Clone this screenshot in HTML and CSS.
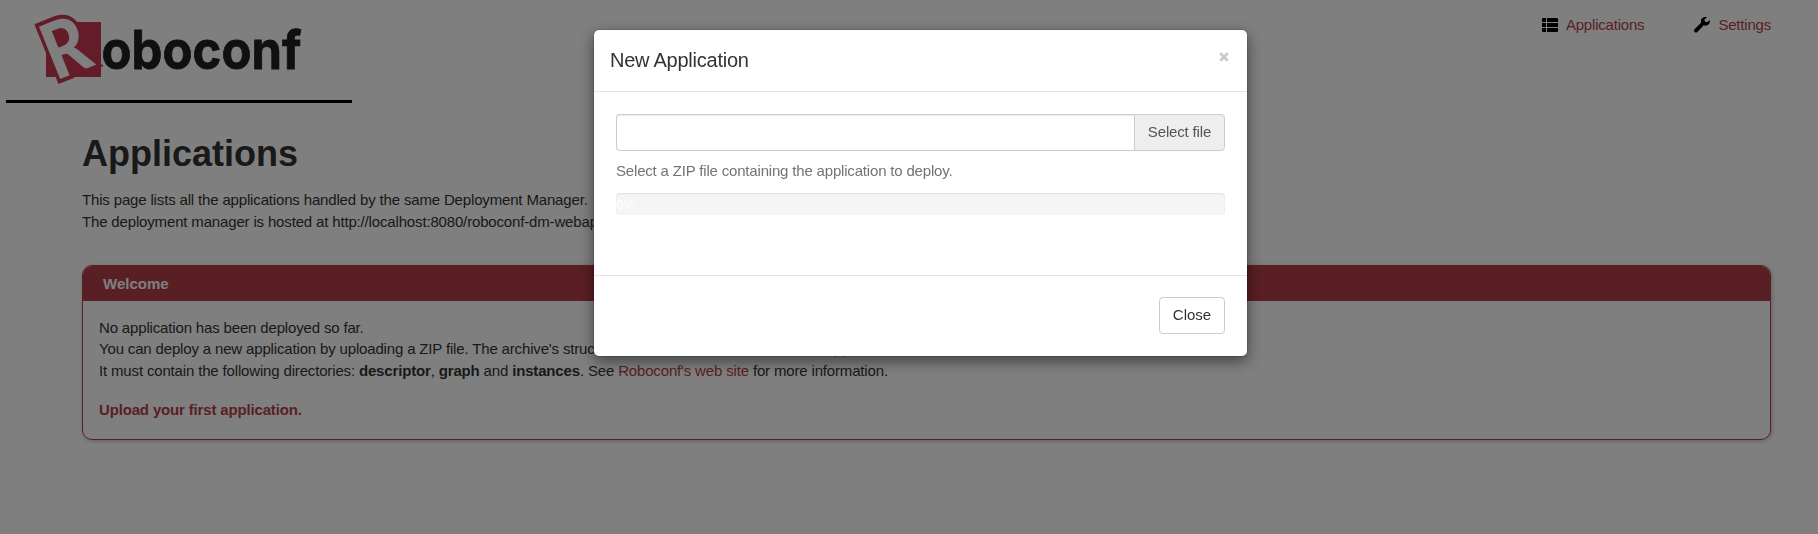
FILE: index.html
```html
<!DOCTYPE html>
<html lang="en">
<head>
<meta charset="utf-8">
<title>Roboconf</title>
<link rel="stylesheet" href="styles.css">
</head>
<body>
<header class="topbar">
  <div class="brand">
    <svg class="logo" viewBox="0 0 346 98" width="346" height="98">
      <rect class="logo-square" x="40" y="22" width="55" height="55"/>
      <text class="logo-r" transform="translate(49.5 81) rotate(-22) scale(.86 1)">R</text>
      <text class="logo-name" x="95.500" y="69" textLength="200" lengthAdjust="spacingAndGlyphs">oboconf</text>
    </svg>
  </div>
  <nav class="nav">
    <a class="nav-link" href="#"><svg class="icon" viewBox="0 0 16 14" width="16" height="14"><path d="M0 1q0-1 1-1h3v4H0zM5 0h10q1 0 1 1v3H5zM0 5h4v4H0zM5 5h11v4H5zM0 10h4v4H1q-1 0-1-1zM5 10h11v3q0 1-1 1H5z"/></svg>Applications</a>
    <a class="nav-link" href="#"><svg class="icon" viewBox="0 0 16 16" width="16" height="16"><path d="M15.7 3.2 13 5.3 10.9 4.6 10.4 2.5 13 .3C11 -.4 8.700 .2 7.600 1.800 6.800 3 6.700 4.300 7.200 5.500L.6 12.200C-.2 13-.2 14.200.6 15s2 .8 2.800 0L9.700 8.300C11.500 9 13.500 8.600 14.800 7.200 15.900 6.100 16.200 4.600 15.700 3.200z"/></svg>Settings</a>
  </nav>
</header>
<main class="content">
  <h1 class="title">Applications</h1>
  <p class="intro">This page lists all the applications handled by the same Deployment Manager.<br>The deployment manager is hosted at http://localhost:8080/roboconf-dm-webapp.</p>
  <section class="panel">
    <h2 class="panel-title">Welcome</h2>
    <div class="panel-body">
      <p class="text">No application has been deployed so far.<br>You can deploy a new application by uploading a ZIP file. The archive's structure must match that of <a href="#">Roboconf's applications</a>.<br>It must contain the following directories: <b>descriptor</b>, <b>graph</b> and <b>instances</b>. See <a href="#">Roboconf's web site</a> for more information.</p>
      <p class="text"><a href="#"><b>Upload your first application.</b></a></p>
    </div>
  </section>
</main>
<div class="backdrop">
  <div class="modal" role="dialog">
    <div class="modal-header">
      <h4 class="modal-title">New Application</h4>
      <button class="dismiss" aria-label="Dismiss"><svg viewBox="0 0 10 10" width="10" height="10"><path d="M1.300 1.300l7.400 7.400M8.700 1.300L1.300 8.700"/></svg></button>
    </div>
    <div class="modal-body">
      <div class="file-group"><input class="file-input" type="text"><span class="file-addon">Select file</span></div>
      <p class="help">Select a ZIP file containing the application to deploy.</p>
      <div class="progress"><span class="progress-label">0%</span></div>
    </div>
    <div class="modal-footer"><button class="button">Close</button></div>
  </div>
</div>
</body>
</html>
```
FILE: styles.css
```css
* { box-sizing: border-box; }
body {
  margin: 0;
  height: 534px;
  overflow: hidden;
  background: #fff;
  color: #333;
  font: 15px/21.4px "Liberation Sans", Arial, sans-serif;
  letter-spacing: -.16px;
}
a { color: #b33e48; text-decoration: none; }
.topbar { display: flex; justify-content: space-between; padding: 0 47px 0 6px; }
.brand { width: 346px; height: 103px; border-bottom: 3px solid #000; }
.logo { display: block; overflow: visible; letter-spacing: 0; }
.logo-square { fill: #c83850; }
.logo-r {
  font: 900 78px/1.2 Lato, sans-serif;
  fill: #fff;
  stroke: #c83850;
  stroke-width: 8px;
  paint-order: stroke;
}
.logo-name { font: 700 53px/1.2 Inter, sans-serif; fill: #202024; stroke: #202024; stroke-width: .8px; }
.nav { display: flex; gap: 50px; padding-top: 14px; height: 40px; }
.nav-link { display: flex; align-items: center; gap: 8px; height: 22px; letter-spacing: -.2px; }
.icon { fill: #000; }
.content { padding: 31px 47px 0 82px; }
.title { margin: 0; font-size: 36px; line-height: 40px; letter-spacing: 0; }
.intro { margin: 15px 0 0; line-height: 22px; }
.panel {
  margin-top: 32px;
  height: 175px;
  border: 1px solid #b33e48;
  border-radius: 10px;
  box-shadow: 1px 1px 4px rgba(0, 0, 0, .25);
  overflow: hidden;
}
.panel-title { margin: 0; height: 35px; padding: 0 20px; background: #b33e48; color: #fff; font-size: 15px; line-height: 35px; letter-spacing: 0; }
.panel-body { padding: 16px 16px; }
.text { margin: 0 0 17.500px; white-space: nowrap; }
.backdrop { position: fixed; inset: 0; padding: 30px 0 0 594px; background: rgba(0, 0, 0, .5); }
.modal {
  width: 653px;
  height: 326px;
  display: flex;
  flex-direction: column;
  background: #fff;
  border-radius: 5px;
  box-shadow: 0 5px 15px rgba(0, 0, 0, .5), 0 0 0 1px rgba(0, 0, 0, .1);
}
.modal-header { display: flex; justify-content: space-between; height: 62px; padding: 18px 18px 0 16px; border-bottom: 1px solid #e5e5e5; }
.modal-title { margin: 0; font-size: 20px; font-weight: normal; line-height: 24px; letter-spacing: -.24px; }
.dismiss { display: block; width: 10px; height: 10px; margin-top: 4px; padding: 0; border: 0; background: none; }
.dismiss svg { display: block; stroke: #ccc; stroke-width: 3; }
.modal-body { height: 183px; padding: 22px; }
.file-group { display: flex; height: 37px; }
.file-input { flex: 1; min-width: 0; border: 1px solid #ccc; border-right: 0; border-radius: 4px 0 0 4px; box-shadow: inset 0 1px 1px rgba(0, 0, 0, .075); }
.file-addon { width: 91px; border: 1px solid #ccc; border-radius: 0 4px 4px 0; background: #eee; color: #555; line-height: 33px; text-align: center; }
.help { margin: 9px 0 12px; color: #737373; letter-spacing: -.18px; }
.progress { height: 22px; border-radius: 4px; background: #f5f5f5; box-shadow: inset 0 1px 2px rgba(0, 0, 0, .1); }
.progress-label { display: block; color: #fff; font-size: 13px; line-height: 23px; letter-spacing: 0; }
.modal-footer { display: flex; flex: 1; justify-content: flex-end; align-items: flex-start; padding: 21px 22px 0; border-top: 1px solid #e5e5e5; }
.button { width: 66px; height: 37px; padding: 0 0 2px; border: 1px solid #ccc; border-radius: 4px; background: #fff; color: #333; font: inherit; }
```
